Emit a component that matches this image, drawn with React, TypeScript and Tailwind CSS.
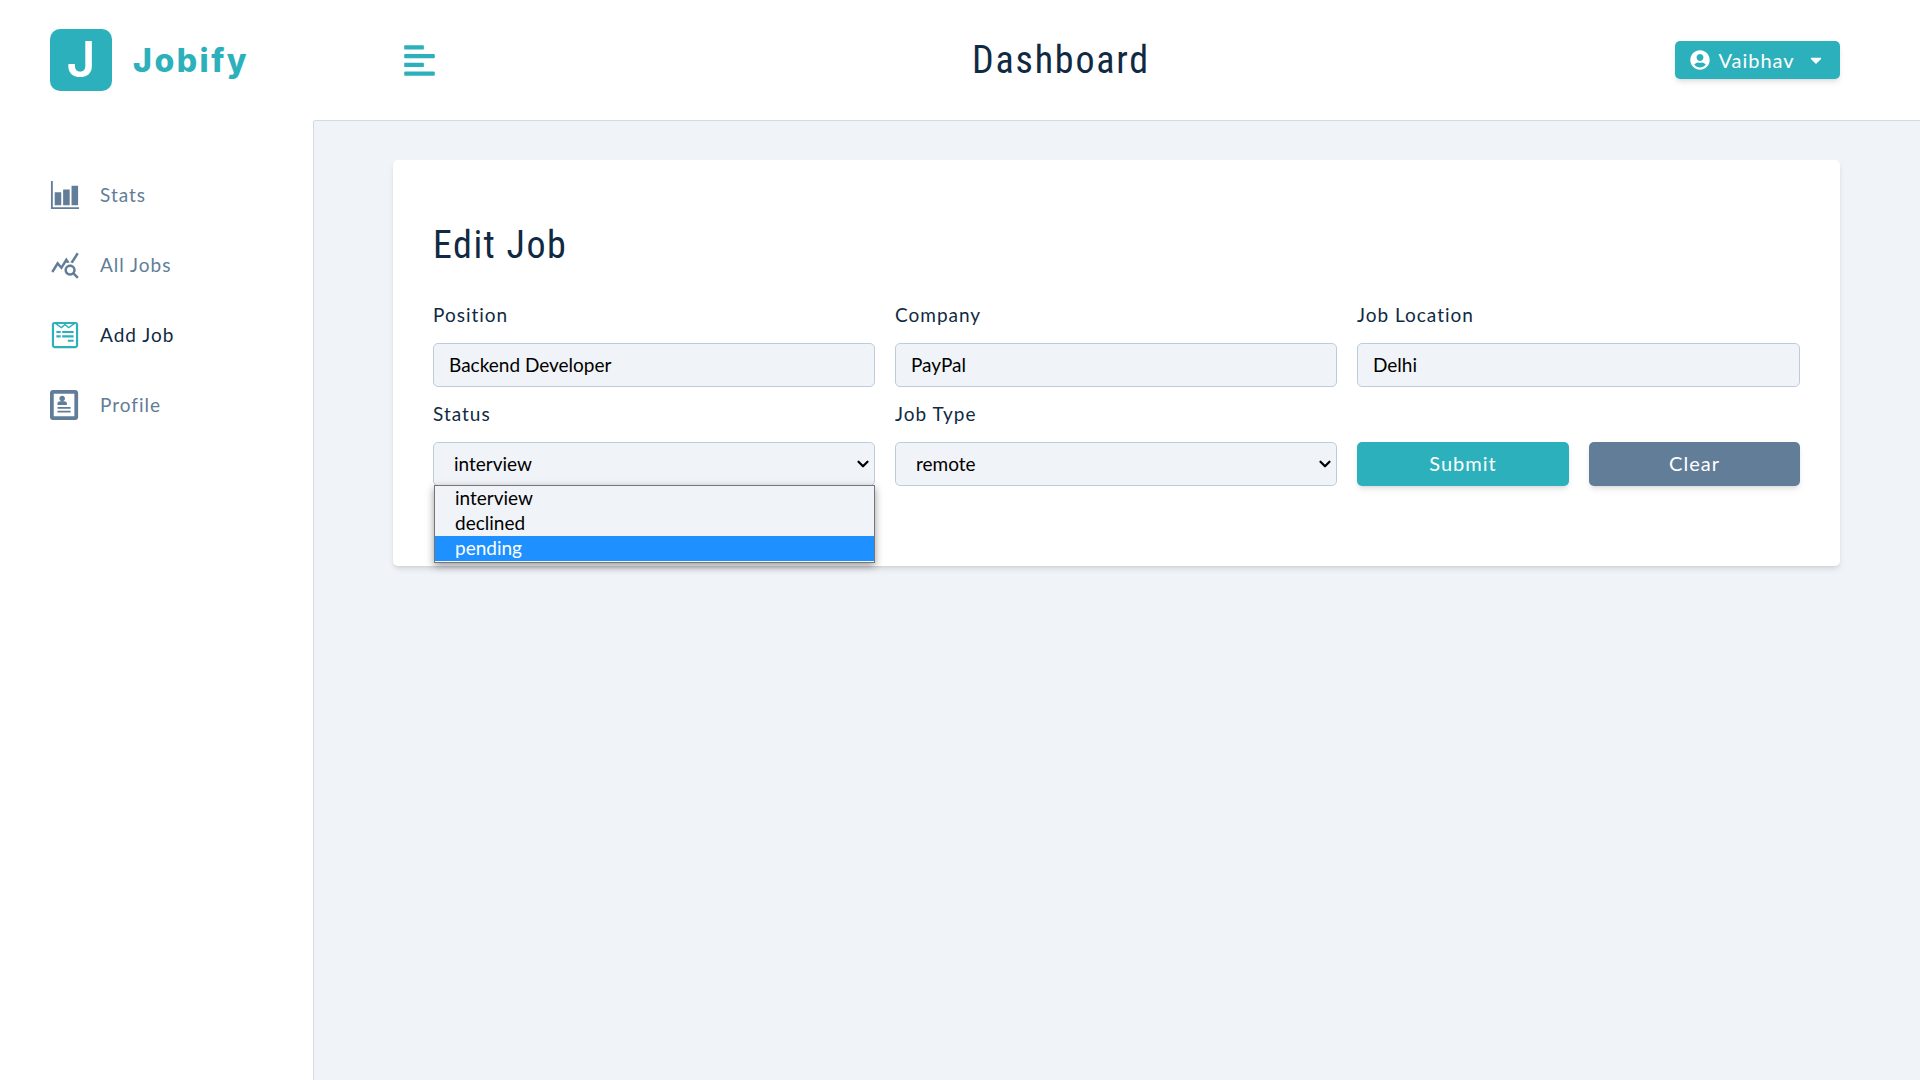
import { ChevronDown } from 'lucide-react';
import { FaAlignLeft, FaCaretDown, FaUserCircle, FaWpforms } from 'react-icons/fa';
import { ImProfile } from 'react-icons/im';
import { IoBarChartSharp } from 'react-icons/io5';
import { MdQueryStats } from 'react-icons/md';

const navLinks = [
  { label: 'Stats', icon: IoBarChartSharp, active: false },
  { label: 'All Jobs', icon: MdQueryStats, active: false },
  { label: 'Add Job', icon: FaWpforms, active: true },
  { label: 'Profile', icon: ImProfile, active: false },
];

const fieldClass =
  'h-11 w-full rounded-[5px] border border-[#bcccdc] bg-[#f0f4f8] text-[19px] text-black outline-none';

const Label = ({ children }: { children: string }) => (
  <label className="mb-[15px] block h-[25px] text-[19px] leading-[23px] tracking-[1px] text-[#102a43]">
    {children}
  </label>
);

const TextField = ({ label, value }: { label: string; value: string }) => (
  <div>
    <Label>{label}</Label>
    <input className={`${fieldClass} px-[15px] pb-[2px]`} defaultValue={value} />
  </div>
);

const SelectField = ({ value, options }: { value: string; options: string[] }) => (
  <div className="relative">
    <select className={`${fieldClass} appearance-none pl-5 pr-6`} defaultValue={value}>
      {options.map((option) => (
        <option key={option}>{option}</option>
      ))}
    </select>
    <ChevronDown className="pointer-events-none absolute right-[3px] top-[13px] h-[18px] w-[18px] text-black" strokeWidth={3} />
  </div>
);

export default function App() {
  return (
    <div className="flex h-screen flex-col overflow-hidden bg-white font-['Lato',sans-serif]">
      {/* Header */}
      <header className="flex h-[121px] shrink-0 bg-white">
        <div className="flex w-[314px] shrink-0 items-center pb-[2px] pl-[50px]">
          <div className="flex h-[62px] w-[62px] items-center justify-center rounded-[10px] bg-[#2cb1bc] font-['Inter',sans-serif] text-[50px] font-semibold text-white">
            J
          </div>
          <span className="ml-[21px] mt-[2px] font-['Inter',sans-serif] text-[32px] font-extrabold tracking-[2.5px] text-[#2cb1bc]">
            Jobify
          </span>
        </div>
        <div className="flex flex-1 items-center justify-between border-b border-[#d5dbe2] pl-[88px] pr-[80px]">
          <FaAlignLeft className="h-[35px] w-[35px] text-[#2cb1bc]" />
          <h1 className="ml-[10px] font-['Roboto',sans-serif] text-[38px] font-normal tracking-[1.8px] text-[#102a43] [font-stretch:75%]">
            Dashboard
          </h1>
          <button className="flex h-[38px] w-[165px] items-center justify-center gap-[8px] rounded-[5px] bg-[#2cb1bc] text-[20px] tracking-[1px] text-white shadow-md">
            <FaUserCircle className="h-[20px] w-[20px]" />
            Vaibhav
            <FaCaretDown className="ml-[4px] h-[18px] w-[18px]" />
          </button>
        </div>
      </header>

      <div className="flex min-h-0 flex-1">
        {/* Sidebar */}
        <aside className="w-[314px] shrink-0 border-r border-[#d5dbe2] bg-white pt-[39px]">
          <nav className="flex flex-col">
            {navLinks.map(({ label, icon: Icon, active }) => (
              <a
                key={label}
                className={`flex h-[70px] items-center pl-[50px] text-[19px] tracking-[1px] ${active ? 'text-[#102a43]' : 'text-[#627d98]'}`}
              >
                <Icon className={`mr-[20px] h-[30px] w-[30px] ${active ? 'text-[#2cb1bc]' : 'text-[#627d98]'}`} />
                {label}
              </a>
            ))}
          </nav>
        </aside>

        {/* Main */}
        <main className="flex-1 bg-[#f0f4f8] pl-[79px] pr-[80px] pt-[39px]">
          <section className="h-[406px] rounded-[5px] bg-white px-[40px] pt-[62px] shadow-md">
            <h3 className="mb-[35px] h-[46px] font-['Roboto',sans-serif] text-[38px] font-normal leading-[46px] tracking-[1.5px] text-[#102a43] [font-stretch:75%]">
              Edit Job
            </h3>
            <form className="grid grid-cols-[442px_442px_443px] gap-x-[20px] gap-y-[15px]">
              <TextField label="Position" value="Backend Developer" />
              <TextField label="Company" value="PayPal" />
              <TextField label="Job Location" value="Delhi" />

              <div className="relative">
                <Label>Status</Label>
                <SelectField value="interview" options={['interview', 'declined', 'pending']} />
                {/* open dropdown list */}
                <ul className="absolute left-[1px] right-0 top-[83px] z-10 h-[78px] border border-[#767676] bg-[#f0f4f8] text-[19px] leading-[24px] text-black shadow-[0_3px_8px_rgba(0,0,0,0.4)]">
                  <li className="h-[25px] pl-[20px]">interview</li>
                  <li className="h-[25px] pl-[20px]">declined</li>
                  <li className="h-[25px] bg-[#1e90ff] pl-[20px] text-white">pending</li>
                </ul>
              </div>

              <div>
                <Label>Job Type</Label>
                <SelectField value="remote" options={['remote', 'full-time', 'part-time', 'internship']} />
              </div>

              <div className="grid grid-cols-[212px_211px] items-end gap-x-[20px]">
                <button
                  type="button"
                  className="h-11 rounded-[5px] bg-[#2cb1bc] pb-[2px] text-[20px] tracking-[1px] text-white shadow-md"
                >
                  Submit
                </button>
                <button
                  type="button"
                  className="h-11 rounded-[5px] bg-[#627d98] pb-[2px] text-[20px] tracking-[1px] text-white shadow-md"
                >
                  Clear
                </button>
              </div>
            </form>
          </section>
        </main>
      </div>
    </div>
  );
}
